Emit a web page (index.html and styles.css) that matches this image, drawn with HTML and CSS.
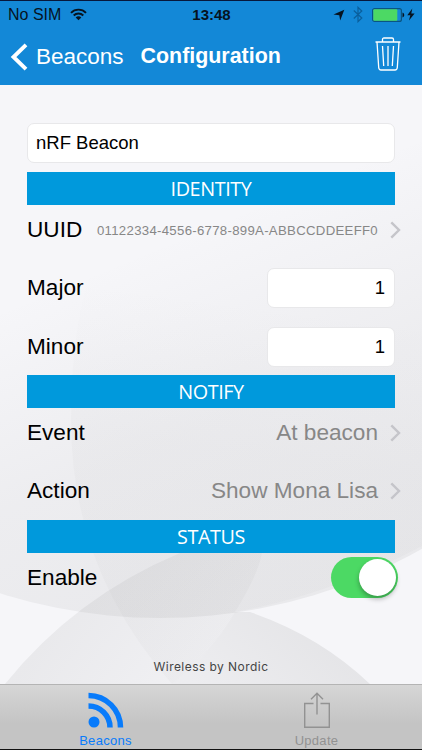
FILE: index.html
```html
<!DOCTYPE html>
<html lang="en">
<head>
    <meta charset="UTF-8">
    <meta name="viewport" content="width=device-width, initial-scale=1.0">
    <title>Configuration</title>
    <link rel="stylesheet" href="styles.css">
</head>
<body>
    <div class="phone">
        <header class="header">
            <div class="status-bar">
                <div class="status-left">
                    <span>No SIM</span>
                    <svg class="wifi" width="17" height="13" viewBox="0 0 17 13">
                        <path d="M1 4.8C5 .6 12 .6 16 4.8M3.7 7.5c2.7-2.7 6.9-2.7 9.6 0" fill="none" stroke="#06131f" stroke-width="1.9"/>
                        <path d="M5.7 9.4c1.6-1.5 4-1.5 5.6 0L8.5 12.3z" fill="#06131f"/>
                    </svg>
                </div>
                <span class="clock">13:48</span>
                <div class="status-right">
                    <svg width="12" height="12" viewBox="0 0 12 12"><path d="M11.3.7L7.2 11.5 6.3 6.2.5 5.5z" fill="#06131f"/></svg>
                    <svg class="bluetooth" width="10" height="17" viewBox="0 0 10 17"><path d="M.8 4.5l8 7.5L5 15.7V1.3L8.8 5l-8 7.5" fill="none" stroke="#0a5f9c" stroke-width="1.2"/></svg>
                    <svg class="battery" width="33" height="14" viewBox="0 0 33 14">
                        <rect x=".6" y=".6" width="28.8" height="12.8" rx="2" fill="none" stroke="#0a5582" stroke-width="1.2"/>
                        <rect x="1.3" y="1.3" width="24" height="11.4" rx="1" fill="#4cd964"/>
                        <path d="M30.5 4.5c2.3 1 2.3 4 0 5z" fill="#06131f"/>
                    </svg>
                    <svg width="8" height="13" viewBox="0 0 8 13"><path d="M5.3.5L.3 7.3h3L2 12.5l5.6-7H4.3z" fill="#06131f"/></svg>
                </div>
            </div>
            <nav class="nav-bar">
                <a class="back">
                    <svg width="18" height="28" viewBox="0 0 18 28"><path d="M16 1.8L3.5 14 16 26.2" fill="none" stroke="#fff" stroke-width="3.9"/></svg>
                    <span>Beacons</span>
                </a>
                <h1>Configuration</h1>
                <svg class="trash" width="26" height="34" viewBox="0 0 26 34">
                    <path d="M.5 5h25M7.5 5V2.5Q7.5 1 9 1h8q1.500 0 1.500 1.500V5M2 5l1.700 25.500Q3.900 33 6 33h14q2.100 0 2.300-2.500L24 5M7.500 9l1.200 20M13 9v20M18.500 9l-1.200 20" fill="none" stroke="#fff" stroke-width="1.300"/>
                </svg>
            </nav>
        </header>

        <main class="content">
            <svg class="backdrop" width="422" height="599" viewBox="0 85 422 599">
                <defs>
                    <linearGradient id="left-circle" x1="170" y1="290" x2="150" y2="440" gradientUnits="userSpaceOnUse">
                        <stop offset="0" stop-color="#777" stop-opacity="0"/>
                        <stop offset="1" stop-color="#777" stop-opacity=".035"/>
                    </linearGradient>
                    <linearGradient id="large-circle" x1="120" y1="260" x2="260" y2="600" gradientUnits="userSpaceOnUse">
                        <stop offset="0" stop-color="#777" stop-opacity="0"/>
                        <stop offset=".5" stop-color="#777" stop-opacity=".07"/>
                        <stop offset="1" stop-color="#777" stop-opacity=".1"/>
                    </linearGradient>
                    <linearGradient id="dome" x1="90" y1="580" x2="230" y2="680" gradientUnits="userSpaceOnUse">
                        <stop offset="0" stop-color="#777" stop-opacity=".1"/>
                        <stop offset="1" stop-color="#777" stop-opacity=".03"/>
                    </linearGradient>
                    <linearGradient id="small-dome" x1="300" y1="625" x2="220" y2="710" gradientUnits="userSpaceOnUse">
                        <stop offset="0" stop-color="#777" stop-opacity=".13"/>
                        <stop offset="1" stop-color="#777" stop-opacity=".07"/>
                    </linearGradient>
                </defs>
                <rect y="85" width="422" height="599" fill="#f6f6f9"/>
                <path d="M71 420Q71 310 100 250H422V546Q330 595 235 612Q212 652 172 684Q71 570 71 420z" fill="url(#left-circle)"/>
                <circle cx="160" cy="88" r="530" fill="url(#large-circle)"/>
                <path d="M5 684Q75 597 180 553H262Q258 575 235 612Q212 652 172 684z" fill="url(#dome)"/>
                <path d="M172 684Q212 652 235 612H250Q320 636 370 684z" fill="url(#small-dome)"/>
            </svg>

            <input class="field name" type="text" value="nRF Beacon">

            <h2 class="section">IDENTITY</h2>
            <div class="row">
                <label>UUID</label>
                <span class="value uuid">01122334-4556-6778-899A-ABBCCDDEEFF0</span>
                <svg class="chevron" width="11" height="18" viewBox="0 0 11 18"><path d="M1.3 1.3L9 9l-7.7 7.7"/></svg>
            </div>
            <div class="row major">
                <label>Major</label>
                <input class="field number" type="text" value="1">
            </div>
            <div class="row minor">
                <label>Minor</label>
                <input class="field number" type="text" value="1">
            </div>

            <h2 class="section">NOTIFY</h2>
            <div class="row">
                <label>Event</label>
                <span class="value">At beacon</span>
                <svg class="chevron" width="11" height="18" viewBox="0 0 11 18"><path d="M1.3 1.3L9 9l-7.7 7.7"/></svg>
            </div>
            <div class="row action">
                <label>Action</label>
                <span class="value">Show Mona Lisa</span>
                <svg class="chevron" width="11" height="18" viewBox="0 0 11 18"><path d="M1.3 1.3L9 9l-7.7 7.7"/></svg>
            </div>

            <h2 class="section">STATUS</h2>
            <div class="row enable">
                <label>Enable</label>
                <div class="switch"><div class="knob"></div></div>
            </div>

            <p class="tagline">Wireless by Nordic</p>
        </main>

        <footer class="tab-bar">
            <a class="tab active">
                <svg width="36" height="36" viewBox="0 0 36 36">
                    <circle cx="6" cy="30" r="5.5" fill="#087bfb"/>
                    <path d="M.5 14A21.500 21.500 0 0 1 22 35.500M.5 3.500A32 32 0 0 1 32.500 35.500" fill="none" stroke="#087bfb" stroke-width="5.500"/>
                </svg>
                <span>Beacons</span>
            </a>
            <a class="tab">
                <svg width="28" height="36" viewBox="0 0 28 36">
                    <path d="M10.5 11.5H1.7v23.700h24.600V11.500h-8.800M14 22.500V1.500M8 7.300l6-6 6 6" fill="none" stroke="#929292" stroke-width="1.400"/>
                </svg>
                <span>Update</span>
            </a>
        </footer>
    </div>
</body>
</html>
```

FILE: styles.css
```css
body, html {
    margin: 0;
    padding: 0;
    height: 100%;
    font-family: "Liberation Sans", Arial, Helvetica, sans-serif;
    overflow: hidden;
}
.phone {
    box-sizing: border-box;
    width: 422px;
    height: 750px;
    border-top: 1px solid #07183c;
    border-bottom: 1px solid #111;
    display: flex;
    flex-direction: column;
}
.header {
    height: 84px;
    background-color: #1388d7;
}
.status-bar {
    display: grid;
    grid-template-columns: 1fr auto 1fr;
    align-items: center;
    height: 27px;
    padding: 0 7px 0 8px;
    font-size: 16px;
    color: #06131f;
}
.status-left, .status-right {
    display: flex;
    align-items: center;
}
.wifi {
    margin-left: 9px;
}
.clock {
    font-size: 15px;
    font-weight: bold;
}
.status-right {
    justify-content: flex-end;
}
.bluetooth {
    margin: 0 9px 0 8px;
}
.battery {
    margin-right: 2px;
}
.nav-bar {
    display: flex;
    align-items: center;
    height: 57px;
    padding: 0 21px 0 10px;
    color: #fff;
}
.back {
    display: flex;
    align-items: center;
    gap: 8px;
    font-size: 22.5px;
}
h1 {
    margin: 0 0 0 17px;
    font-size: 21.4px;
    font-weight: bold;
}
.trash {
    margin: -5px 0 0 auto;
}
.content {
    position: relative;
    z-index: 0;
    flex: 1;
    padding: 38px 27px 0;
}
.backdrop {
    position: absolute;
    top: 0;
    left: 0;
    z-index: -1;
}
.field {
    display: block;
    box-sizing: border-box;
    height: 40px;
    padding: 0 8px;
    border: 1px solid #e8e8ea;
    border-radius: 7px;
    background-color: #fff;
    font-family: inherit;
    font-size: 18.5px;
    color: #000;
}
.name {
    width: 100%;
    margin-bottom: 9px;
}
.number {
    width: 128px;
    margin-left: auto;
    padding-right: 9px;
    text-align: right;
}
.section {
    margin: 0;
    height: 33px;
    line-height: 33px;
    background-color: #0099dc;
    color: #fff;
    font-family: "Open Sans", sans-serif;
    font-size: 19.8px;
    font-weight: normal;
    letter-spacing: -0.4px;
    text-align: center;
}
.row {
    display: flex;
    align-items: center;
    height: 50px;
    font-size: 22.6px;
}
.major {
    height: 66px;
}
.minor {
    box-sizing: border-box;
    height: 54px;
    padding-bottom: 2px;
}
.action {
    box-sizing: border-box;
    height: 62px;
    padding-top: 4px;
}
.enable {
    height: 49px;
}
.value {
    margin-left: auto;
    color: #878787;
}
.uuid {
    font-size: 13.2px;
    letter-spacing: 0.3px;
}
.chevron {
    margin: 0 -6px 0 12px;
    fill: none;
    stroke: #c5c5ca;
    stroke-width: 2.4;
}
.switch {
    box-sizing: border-box;
    width: 67px;
    height: 41px;
    margin: 0 -3px 0 auto;
    padding: 2px;
    border-radius: 21px;
    background-color: #4cd964;
}
.knob {
    width: 37px;
    height: 37px;
    margin-left: auto;
    border-radius: 50%;
    background-color: #fff;
    box-shadow: 0 3px 5px rgba(0, 0, 0, 0.3);
}
.tagline {
    margin: 56px 0 0;
    font-family: Inter, sans-serif;
    font-size: 12px;
    line-height: 18px;
    letter-spacing: 0.45px;
    color: #444;
    text-align: center;
}
.tab-bar {
    box-sizing: border-box;
    display: grid;
    grid-template-columns: 1fr 1fr;
    height: 65px;
    border-top: 1px solid #b4b4b4;
    background: linear-gradient(#d6d6d6, #c4c4c4 60%);
}
.tab {
    display: flex;
    flex-direction: column;
    align-items: center;
    padding-top: 7px;
    font-size: 13px;
    line-height: 15px;
    color: #929292;
    letter-spacing: 0.3px;
}
.tab span {
    margin-top: 5px;
}
.active {
    color: #087bfb;
}
```
